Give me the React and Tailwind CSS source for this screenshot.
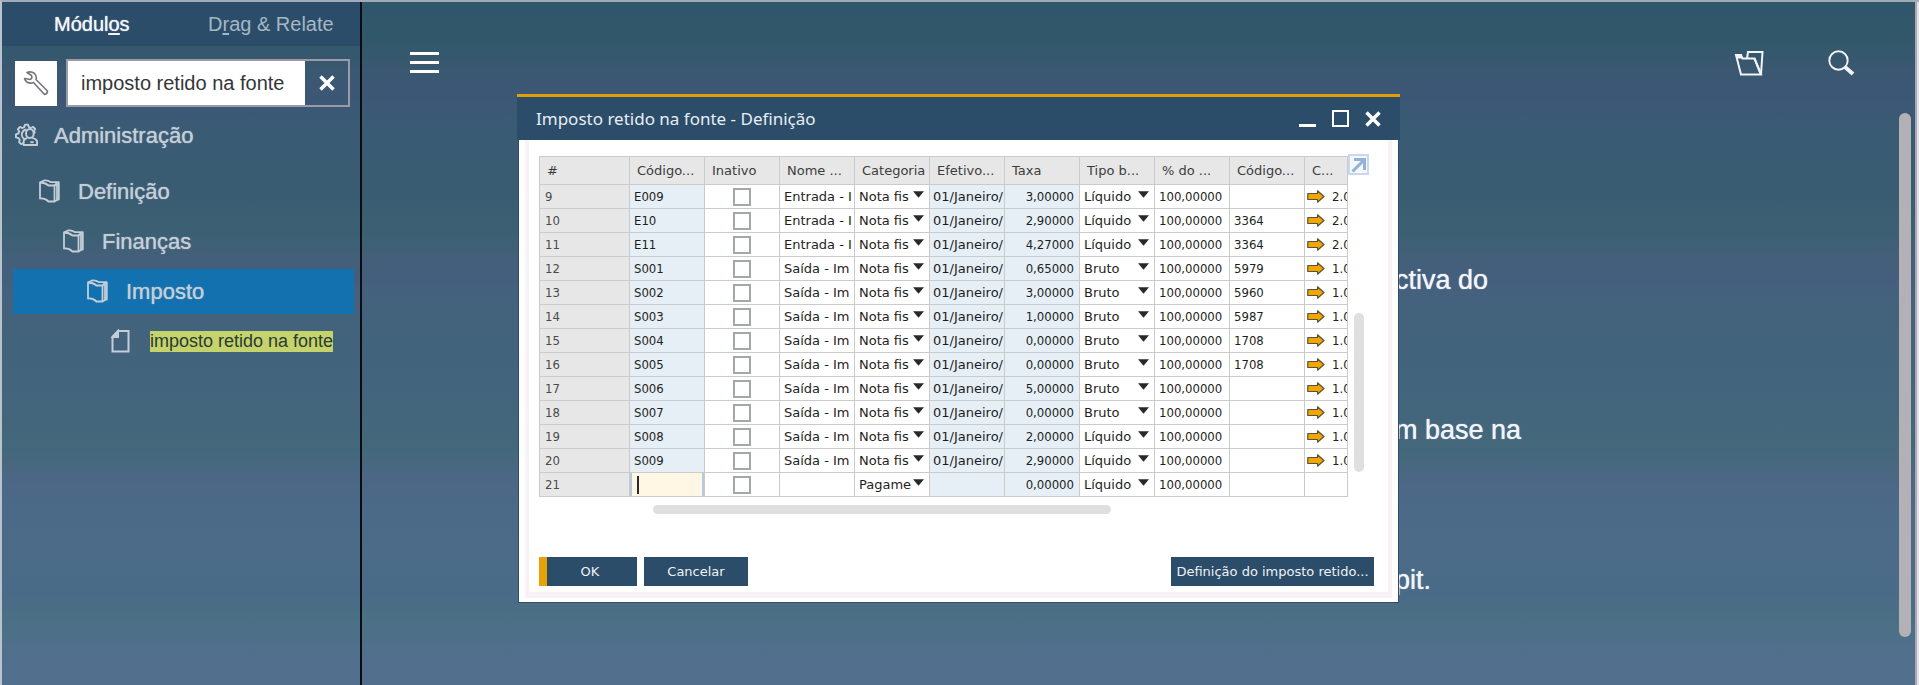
import React from "react";

const rows = [
  ["9", "E009", "Entrada - I", "Nota fis", "01/Janeiro/", "3,00000", "Líquido", "", "2.0"],
  ["10", "E10", "Entrada - I", "Nota fis", "01/Janeiro/", "2,90000", "Líquido", "3364", "2.0"],
  ["11", "E11", "Entrada - I", "Nota fis", "01/Janeiro/", "4,27000", "Líquido", "3364", "2.0"],
  ["12", "S001", "Saída - Im", "Nota fis", "01/Janeiro/", "0,65000", "Bruto", "5979", "1.0"],
  ["13", "S002", "Saída - Im", "Nota fis", "01/Janeiro/", "3,00000", "Bruto", "5960", "1.0"],
  ["14", "S003", "Saída - Im", "Nota fis", "01/Janeiro/", "1,00000", "Bruto", "5987", "1.0"],
  ["15", "S004", "Saída - Im", "Nota fis", "01/Janeiro/", "0,00000", "Bruto", "1708", "1.0"],
  ["16", "S005", "Saída - Im", "Nota fis", "01/Janeiro/", "0,00000", "Bruto", "1708", "1.0"],
  ["17", "S006", "Saída - Im", "Nota fis", "01/Janeiro/", "5,00000", "Bruto", "", "1.0"],
  ["18", "S007", "Saída - Im", "Nota fis", "01/Janeiro/", "0,00000", "Bruto", "", "1.0"],
  ["19", "S008", "Saída - Im", "Nota fis", "01/Janeiro/", "2,00000", "Líquido", "", "1.0"],
  ["20", "S009", "Saída - Im", "Nota fis", "01/Janeiro/", "2,90000", "Líquido", "", "1.0"],
  ["21", "", "", "Pagame", "", "0,00000", "Líquido", "", ""],
];

const headings = ["#", "Código...", "Inativo", "Nome ...", "Categoria", "Efetivo...", "Taxa", "Tipo b...", "% do ...", "Código...", "C..."];

function FolderIcon() {
  return (
    <svg className="h-6 w-[21px] shrink-0" viewBox="0 0 21 24" fill="none" stroke="currentColor" strokeWidth="1.8" strokeLinejoin="round">
      <path d="M1 3.500 V19.500 Q6 19 9.500 22.500 H15.500 V6.500 H9.500 Q6 3.500 1 3.500 Z" />
      <path d="M1 3.500 L5 1.500 Q9 1 12 3.200 H19.800 V20.500 H18" />
      <path d="M15.500 6.500 L18 4 V21 L15.500 22.500" />
    </svg>
  );
}

function PageIcon() {
  return (
    <svg className="h-6 w-[19px] shrink-0" viewBox="0 0 19 24" fill="none" stroke="currentColor" strokeWidth="2">
      <path d="M7 2 H17.500 V22.500 H1.500 V8 Z" />
      <path d="M7 2 V8 H1.500 Z" fill="currentColor" />
    </svg>
  );
}

function AdminIcon() {
  return (
    <svg className="h-6 w-[23px] shrink-0" viewBox="0 0 24 24" fill="none" stroke="currentColor" strokeWidth="2" strokeLinejoin="round">
      <path d="M8.500 20.500 L6.500 21.500 L4.300 19.500 L5 17 L3.700 15.300 L1 14.500 L1 11.300 L3.600 10.300 L4.300 8.300 L3 5.800 L5.200 3.600 L7.700 4.700 L9.600 3.800 L10.500 1.200 L13.600 1.200 L14.500 3.800 L16.400 4.700 L18.900 3.500 L21 5.700 L19.900 8.200 L20.800 10.200" />
      <path d="M10.500 16.500 A5.500 5.500 0 0 1 7.500 9.500 Q9 6.500 12 6.300" />
      <ellipse cx="15.500" cy="10.500" rx="4" ry="4.700" />
      <path d="M13 15 Q9.500 16 9 18.500 V22.500 H23 V18.500 Q22 16 18 15" />
      <path d="M16 19.500 H19.500" />
    </svg>
  );
}

function WrenchIcon() {
  return (
    <svg className="h-[26px] w-[26px]" viewBox="0 0 26 26" fill="none" stroke="#74747c" strokeWidth="1.6" strokeLinejoin="round">
      <path d="M4 2.500 Q8 .8 11.500 3.500 Q14 6 13 9.500 L24.500 21 Q24.500 24 21.500 24.500 L10.500 12.500 Q7 14 4 12 Q2 10.500 1.500 8.500 L7.500 9.500 L9 7.500 L8.500 5.500 Z" />
    </svg>
  );
}

function CloseGlyph() {
  return (
    <svg className="h-4 w-4" viewBox="0 0 16 16" stroke="currentColor" strokeWidth="3.500">
      <path d="M1.500 1.500 L14.500 14.500 M14.500 1.500 L1.500 14.500" />
    </svg>
  );
}

function ChoiceCell({ value, label }) {
  return (
    <div className="flex h-[23px] items-center pl-1">
      <select aria-label={label} defaultValue={value} className="h-[23px] w-[52px] shrink-0 appearance-none overflow-hidden bg-transparent p-0 font-['DejaVu_Sans',sans-serif] text-[13px] leading-[23px] outline-none">
        <option>{value}</option>
      </select>
      <svg className="pointer-events-none ml-0.5 h-[7px] w-[11px] shrink-0 -translate-y-0.5" viewBox="0 0 12 7" fill="#26292c">
        <path d="M0 0 H12 L6 7 Z" />
      </svg>
    </div>
  );
}

function TreeRow({ icon, selected, spacing, children }) {
  return (
    <li className="flex h-[50px] items-center">
      <a href="#item" className={`flex h-[45px] flex-1 items-center ${spacing} ${selected ? "bg-[#1271ae]" : ""}`}>
        {icon}
        {children}
      </a>
    </li>
  );
}

function Sidebar() {
  return (
    <aside className="flex w-[360px] shrink-0 flex-col border-r-2 border-[#0a0d10] font-['Liberation_Sans',Arial,sans-serif]">
      <nav className="flex h-11 bg-[#2b4d6a] text-xl" aria-label="Menu">
        <button className="w-[178px] text-left pl-[52px] text-[#f2f5f7] [text-shadow:0_0_1px_#f2f5f7]">
          Módul<span className="underline underline-offset-2">o</span>s
        </button>
        <button className="flex-1 text-left pl-7 text-[#a6b7c4]">
          D<span className="underline underline-offset-2">r</span>ag &amp; Relate
        </button>
      </nav>
      <div className="flex items-center gap-[9px] pt-[13px] pl-[13px] pr-2.5">
        <button aria-label="Configurar" className="flex h-[45px] w-[42px] items-center justify-center bg-white">
          <WrenchIcon />
        </button>
        <div className="flex h-12 flex-1 border-2 border-[#9b9aa6]">
          <input aria-label="Pesquisar" defaultValue="imposto retido na fonte" className="w-0 flex-1 bg-white pl-[13px] text-xl text-[#33363a] outline-none" />
          <button aria-label="Limpar" className="flex w-[43px] items-center justify-center text-white">
            <CloseGlyph />
          </button>
        </div>
      </div>
      <ul className="mt-[3px] pl-[11px] pr-1.5 text-[22px] text-[#c3ced7] [text-shadow:0_0_1px_#c3ced7]">
        <TreeRow icon={<AdminIcon />} spacing="gap-4 pl-[2px]">Administração</TreeRow>
        <li className="h-1.5" aria-hidden="true" />
        <TreeRow icon={<FolderIcon />} spacing="gap-[18px] pl-[26px]">Definição</TreeRow>
        <TreeRow icon={<FolderIcon />} spacing="gap-[18px] pl-[50px]">Finanças</TreeRow>
        <TreeRow icon={<FolderIcon />} spacing="gap-[18px] pl-[74px]" selected>Imposto</TreeRow>
        <TreeRow icon={<PageIcon />} spacing="gap-5 pl-[98px]">
          <mark className="bg-[#c5d36c] text-lg leading-[21px] text-[#2b3a33] [text-shadow:none]">imposto retido na fonte</mark>
        </TreeRow>
      </ul>
    </aside>
  );
}

function TaxTable() {
  const cell = "overflow-hidden whitespace-nowrap border border-[#cbcbcb] p-0 h-6";
  const numeric = "font-['DejaVu_Sans_Condensed','DejaVu_Sans',sans-serif]";
  return (
    <table className="w-[809px] table-fixed border-collapse text-[13px] leading-[23px] text-[#1d1f22]">
      <colgroup>
        <col className="w-[90px]" />
        {headings.slice(1, 10).map((_, i) => <col key={i} className="w-[75px]" />)}
        <col className="w-[43px]" />
      </colgroup>
      <thead>
        <tr className="h-7 bg-[#e7e7e7] text-[#3c3c3c]">
          {headings.map((h, i) => (
            <th key={i} className="overflow-hidden whitespace-nowrap border border-[#cbcbcb] p-0 pl-[7px] text-left font-normal">{h}</th>
          ))}
        </tr>
      </thead>
      <tbody>
        {rows.map(([n, code, name, cat, date, rate, base, official, last]) => (
          <tr key={n} className="bg-white">
            <td className={`${cell} ${numeric} bg-[#e7e7e7] pl-[5px] text-[#4a4a4a]`}>{n}</td>
            {code ? (
              <td className={`${cell} ${numeric} bg-[#e6eef6] pl-1`}>{code}</td>
            ) : (
              <td className={`${cell} bg-[#fff6e4]`}>
                <div className="flex h-[23px] items-center border-x-2 border-[#b3cbe0] pl-[5px]">
                  <span className="h-[18px] w-0.5 shrink-0 bg-[#2b2b33]" />
                  <input aria-label="Código" className="h-[23px] w-0 flex-1 bg-transparent outline-none" />
                </div>
              </td>
            )}
            <td className={cell}>
              <div className="flex h-[23px] items-center justify-center">
                <input type="checkbox" aria-label={`Inativo ${n}`} className="h-[18px] w-[18px] appearance-none border-2 border-[#a2a7a7] bg-white" />
              </div>
            </td>
            <td className={`${cell} pl-1`}>{name}</td>
            <td className={cell}><ChoiceCell value={cat} label={`Categoria ${n}`} /></td>
            <td className={`${cell} bg-[#e6eef6] pl-[3px]`}>{date}</td>
            <td className={`${cell} ${numeric} bg-[#e6eef6] pr-[5px] text-right`}>{rate}</td>
            <td className={cell}><ChoiceCell value={base} label={`Tipo base ${n}`} /></td>
            <td className={`${cell} ${numeric} pl-1`}>100,00000</td>
            <td className={`${cell} ${numeric} pl-1`}>{official}</td>
            <td className={`${cell} ${numeric}`}>
              {last && (
                <div className="flex h-[23px] items-center gap-[7px] pl-0.5">
                  <svg className="h-[13px] w-[18px] shrink-0" viewBox="0 0 18 13" fill="#f0a500" stroke="#5c4f3a" strokeWidth="1.200" strokeLinejoin="round">
                    <path d="M.8 3.500 H10.500 V.8 L17 6.500 L10.500 12.200 V9.500 H.8 Z" />
                  </svg>
                  {last}
                </div>
              )}
            </td>
          </tr>
        ))}
      </tbody>
    </table>
  );
}

function TaxDialog() {
  const button = "h-[29px] bg-[#2b4d6a] text-[13px] text-[#eef2f5] whitespace-nowrap";
  return (
    <section role="dialog" aria-labelledby="dialog-title" className="absolute left-[155px] top-[92px] w-[883px] font-['DejaVu_Sans',sans-serif]">
      <header className="flex h-[46px] items-center border-t-[3px] border-[#e09e0b] bg-[#2b4d6a] pl-[19px] pr-[19px] text-white">
        <h1 id="dialog-title" className="flex-1 font-['Noto_Sans',sans-serif] text-[17px] text-[#e8eef3]">Imposto retido na fonte - Definição</h1>
        <div className="flex items-center gap-4">
          <button aria-label="Minimizar" className="flex h-[17px] w-[17px] items-end"><span className="h-[3px] w-full bg-white" /></button>
          <button aria-label="Maximizar" className="h-[17px] w-[17px] border-2 border-white" />
          <button aria-label="Fechar" className="flex w-4 items-center"><CloseGlyph /></button>
        </div>
      </header>
      <div className="mx-px border border-[#2b4d6a] border-t-0 bg-white px-1.5 pb-1">
        <div className="border-x-4 border-b-[6px] border-[#f7f2f5] pb-1.5 pl-2.5 pr-3.5 pt-3.5">
          <div className="flex items-start">
            <div className="pt-0.5"><TaxTable /></div>
            <div className="flex w-[21px] shrink-0 flex-col items-center">
              <button aria-label="Expandir" className="flex h-[21px] w-[21px] items-center justify-center border-2 border-[#c9d8ec] bg-[#f4f8fd]">
                <svg className="h-4 w-4" viewBox="0 0 16 16" fill="none" stroke="#93b2d9" strokeWidth="3">
                  <path d="M1.500 14.500 L13 3 M3 2.500 H13.500 V13" />
                </svg>
              </button>
              <div className="mt-[138px] h-[159px] w-2.5 rounded-full bg-[#dfdfdf]" />
            </div>
          </div>
          <div className="ml-[114px] mt-2 h-[9px] w-[458px] rounded-full bg-[#dfdfdf]" />
          <div className="mt-[43px] flex gap-[7px]">
            <button className={`${button} w-[98px] border-l-8 border-[#e6a207] pr-1`}>OK</button>
            <button className={`${button} w-[104px]`}>Cancelar</button>
            <button className={`${button} ml-auto w-[203px]`}>Definição do imposto retido...</button>
          </div>
        </div>
      </div>
    </section>
  );
}

export default function App() {
  return (
    <div className="flex min-h-screen border-t-2 border-l-2 border-[#a3abb9] border-l-[#b9c3cf] bg-[linear-gradient(180deg,#30566b_0px,#31586a_38px,#3b5872_75px,#3c5775_98px,#3a5b74_130px,#3a5c72_195px,#3c6073_235px,#445f7a_260px,#445f7d_280px,#43637c_310px,#43647d_390px,#44687b_450px,#4c6785_480px,#4b6a87_510px,#4a6b87_595px,#4b7084_620px,#526f8e_660px,#536f8e_685px)] bg-origin-border">
      <Sidebar />
      <main className="relative flex flex-1 flex-col font-['Liberation_Sans',Arial,sans-serif]">
        <div className="flex h-[120px] items-start pl-12 pr-[60px] pt-12 text-[#f1f3f5]">
          <button aria-label="Menu" className="flex w-[29px] flex-col gap-1.5 pt-0.5">
            <span className="h-[3px] w-full bg-white" />
            <span className="h-[3px] w-full bg-white" />
            <span className="h-[3px] w-full bg-white" />
          </button>
          <button aria-label="Abrir" className="ml-auto">
            <svg className="h-[26px] w-[30px]" viewBox="0 0 30 26" fill="none" stroke="currentColor" strokeWidth="2">
              <path d="M2 5 H7 L8.500 8.500 H20.500 L27 24.500 H7 Z" />
              <path d="M1 4 H8 V8.500 H3 Z" fill="currentColor" stroke="none" />
              <path d="M13 8.500 L14 2 H28.500 L27 24.500 L20.500 8.500" />
            </svg>
          </button>
          <button aria-label="Pesquisar" className="ml-16">
            <svg className="h-[26px] w-[27px]" viewBox="0 0 27 26" fill="none" stroke="currentColor">
              <circle cx="10.500" cy="10.500" r="9.200" strokeWidth="1.900" />
              <path d="M17 17 L25 24" strokeWidth="4" />
            </svg>
          </button>
        </div>
        <div className="flex flex-col gap-[110px] pl-[1033px] pt-[138px] text-[27px] leading-10 text-[#f1f4f8] [text-shadow:0_0_1px_#f1f4f8]">
          <p>ctiva do</p>
          <p>m base na</p>
          <p>pit.</p>
        </div>
        <TaxDialog />
        <div className="absolute right-1 top-[111px] h-[524px] w-3 rounded-full bg-[#b3b1b5]" />
      </main>
      <div className="w-1 shrink-0 border-l-2 border-[#a9a9b6] bg-[#e4e0e8]" />
    </div>
  );
}
